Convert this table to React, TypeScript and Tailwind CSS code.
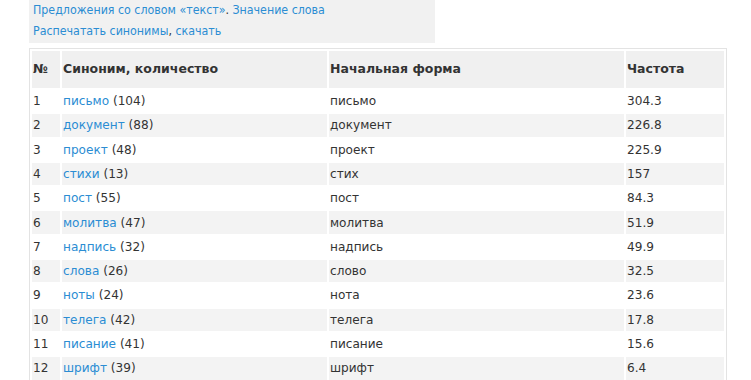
import React from "react";

const rows: [string, string, string, string][] = [
  ["письмо", "104", "письмо", "304.3"],
  ["документ", "88", "документ", "226.8"],
  ["проект", "48", "проект", "225.9"],
  ["стихи", "13", "стих", "157"],
  ["пост", "55", "пост", "84.3"],
  ["молитва", "47", "молитва", "51.9"],
  ["надпись", "32", "надпись", "49.9"],
  ["слова", "26", "слово", "32.5"],
  ["ноты", "24", "нота", "23.6"],
  ["телега", "42", "телега", "17.8"],
  ["писание", "41", "писание", "15.6"],
  ["шрифт", "39", "шрифт", "6.4"],
];

export default function App() {
  return (
    <div
      className="w-[751px] h-[380px] overflow-hidden bg-white text-[12.1px] text-[#333]"
      style={{ fontFamily: '"DejaVu Sans", Verdana, sans-serif' }}
    >
      <div
        className="ml-[29px] w-[406px] h-[43px] bg-[#f1f1f1] pl-[4px] text-[12.3px]"
        style={{ fontFamily: '"DejaVu Sans Condensed", "DejaVu Sans", sans-serif' }}
      >
        <div className="leading-[21px]">
          <a className="text-[#2b8dd3]">Предложения со словом «текст»</a>.{" "}
          <a className="text-[#2b8dd3]">Значение слова</a>
        </div>
        <div className="leading-[21px]">
          <a className="text-[#2b8dd3]">Распечатать синонимы</a>,{" "}
          <a className="text-[#2b8dd3]">скачать</a>
        </div>
      </div>
      <table className="ml-[29px] mt-[5px] w-[698px] table-fixed border border-[#e3e3e3] border-separate border-spacing-[2px]">
        <colgroup>
          <col className="w-[28px]" />
          <col className="w-[265px]" />
          <col className="w-[295px]" />
          <col className="w-[98px]" />
        </colgroup>
        <thead>
          <tr className="h-[37px] bg-[#f0f0f0] font-bold text-left text-[12.5px]">
            <th className="pl-[1px] text-left">№</th>
            <th className="pl-[1px] text-left">Синоним, количество</th>
            <th className="pl-[1px] text-left">Начальная форма</th>
            <th className="pl-[1px] text-left">Частота</th>
          </tr>
        </thead>
        <tbody>
          {rows.map((r, i) => (
            <tr
              key={i}
              className={i % 2 === 1 ? "h-[22.3px] bg-[#f3f3f3]" : "h-[22.3px] bg-white"}
            >
              <td className="pl-[1px] p-0 whitespace-nowrap">{i + 1}</td>
              <td className="pl-[1px] p-0 whitespace-nowrap">
                <a className="text-[#2b8dd3]">{r[0]}</a> ({r[1]})
              </td>
              <td className="pl-[1px] p-0 whitespace-nowrap">{r[2]}</td>
              <td className="pl-[1px] p-0 whitespace-nowrap">{r[3]}</td>
            </tr>
          ))}
        </tbody>
      </table>
    </div>
  );
}
